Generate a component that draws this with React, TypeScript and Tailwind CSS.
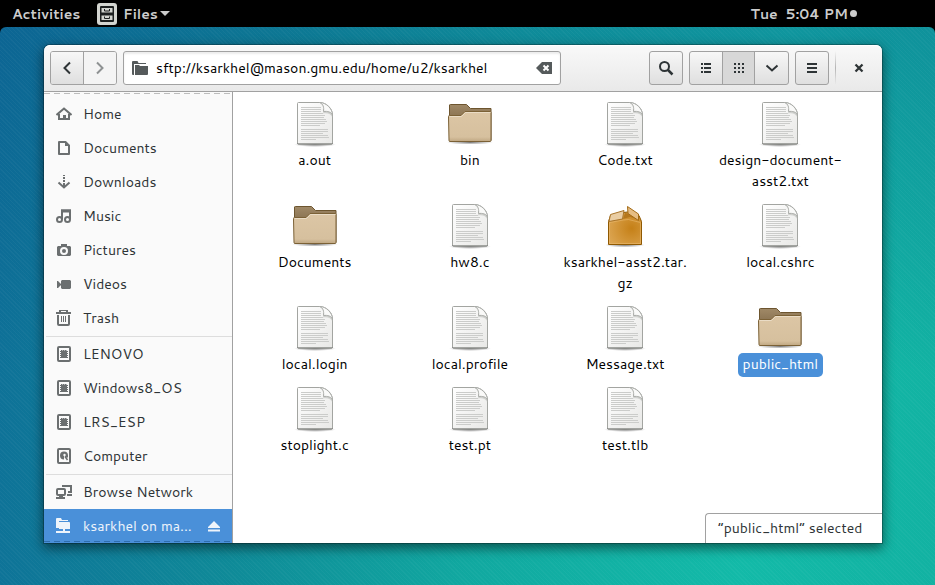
import React from "react";

type IconProps = { className?: string };

const svg16 = { viewBox: "0 0 16 16", width: 16, height: 16, fill: "none", "aria-hidden": true } as const;

const HomeIcon = () => (
  <svg {...svg16}>
    <path d="M.5 9 8 2.500 15.500 9" stroke="currentColor" strokeWidth="2" />
    <path d="M3 8v5h10V8" stroke="currentColor" strokeWidth="2" />
    <path d="M7 9h3v4H7z" fill="currentColor" />
  </svg>
);
const DocumentsIcon = () => (
  <svg {...svg16}>
    <path d="M3 2h6.500L13 5.500V14H3z" stroke="currentColor" strokeWidth="2" strokeLinejoin="round" />
    <path d="M9 1v5h5z" fill="currentColor" />
  </svg>
);
const DownloadsIcon = () => (
  <svg {...svg16}>
    <path d="M7 1h2v1H7zM7 3h2v2H7zM7 6h2v2H7z" fill="currentColor" />
    <path d="M2.500 8.500 8 13.500l5.500-5M8 9v4" stroke="currentColor" strokeWidth="2" />
  </svg>
);
const MusicIcon = () => (
  <svg {...svg16}>
    <path d="M6 11V2.500h8V11" stroke="currentColor" strokeWidth="2" />
    <path d="M5 1.500h10v3H5z" fill="currentColor" />
    <circle cx="3.500" cy="11.500" r="2.500" stroke="currentColor" strokeWidth="2" />
    <circle cx="11.500" cy="11.500" r="2.500" stroke="currentColor" strokeWidth="2" />
  </svg>
);
const PicturesIcon = () => (
  <svg {...svg16}>
    <path fillRule="evenodd" d="M5 2h6v2h3l1 1v8l-1 1H2l-1-1V5l1-1h3zM8 5a4 4 0 1 0 0 8 4 4 0 0 0 0-8zm0 2a2 2 0 1 1 0 4 2 2 0 0 1 0-4z" fill="currentColor" />
  </svg>
);
const VideosIcon = () => (
  <svg {...svg16}>
    <path d="M5 5l1-1h8l1 1v7l-1 1H6l-1-1zM1 5h1l3 3v1l-3 3H1z" fill="currentColor" />
  </svg>
);
const TrashIcon = () => (
  <svg {...svg16}>
    <path d="M2 5v9q0 1 1 1h9q1 0 1-1V5" stroke="currentColor" strokeWidth="2" />
    <path d="M0 2h15v2H0zM3 0h9v2H3z" fill="currentColor" />
    <path d="M5.500 6v6M7.500 6v6M9.500 6v6" stroke="currentColor" />
    <path d="M5 1.500h5" stroke="#fafafa" />
  </svg>
);
const ChipIcon = () => (
  <svg {...svg16}>
    <rect x="2" y="1" width="12" height="14" rx="1" stroke="currentColor" strokeWidth="2" />
    <path d="M5 4.500h6v7H5z" fill="currentColor" />
    <path d="M4 5.500h8M4 7.500h8M4 9.500h8M4 11.500h8M5.500 4v8M7.500 4v8M9.500 4v8" stroke="currentColor" />
  </svg>
);
const DiskIcon = () => (
  <svg {...svg16}>
    <rect x="2" y="1" width="12" height="14" rx="1" stroke="currentColor" strokeWidth="2" />
    <path d="M4 7.500a4 4 0 1 1 8 0v2h-2l-2-2v4a4 4 0 0 1-4-4z" fill="currentColor" />
    <circle cx="8.500" cy="7" r="1.200" fill="#fafafa" />
    <path d="M9 8.500l2.500 3.500" stroke="currentColor" strokeWidth="1.500" />
  </svg>
);
const NetworkIcon = () => (
  <svg {...svg16}>
    <rect x="1" y="5" width="8" height="6" rx="1" stroke="currentColor" strokeWidth="2" />
    <path d="M0 13h9v2H0zM3 12h4v2H3z" fill="currentColor" />
    <path d="M7 3V2h8v6h-3" stroke="currentColor" strokeWidth="2" />
    <path d="M11 10h5v2h-5z" fill="currentColor" />
  </svg>
);
const RemoteFolderIcon = () => (
  <svg {...svg16}>
    <path d="M0 1q0-1 1-1h4l1 2h6v1H3v7H0zM3 4h10q1 0 1 1v6H9v2h5v2H0v-2h7v-2H3z" fill="currentColor" />
  </svg>
);
const EjectIcon = () => (
  <svg viewBox="0 0 12 12" width="12" height="12" aria-hidden="true">
    <path d="M6 1l6 6v1H0V7zM0 9.500h12v2H0z" fill="currentColor" />
  </svg>
);
const ChevronIcon = ({ className }: IconProps) => (
  <svg {...svg16} className={className}>
    <path d="M11 2.500 5.500 8l5.500 5.500" stroke="currentColor" strokeWidth="2" />
  </svg>
);
const DownIcon = () => (
  <svg {...svg16}>
    <path d="M2.500 5.500 8 10.500l5.500-5" stroke="currentColor" strokeWidth="2" />
  </svg>
);
const FolderSymbol = () => (
  <svg {...svg16} className="shrink-0">
    <path d="M0 2q0-1 1-1h4.500l1 2H14v1H2v11H1q-1 0-1-1zM3 5h4l1 1h8v8q0 1-1 1H3z" fill="currentColor" />
  </svg>
);
const ClearIcon = () => (
  <svg {...svg16}>
    <path d="M6 2h10v12H6L0 8z" fill="currentColor" />
    <path d="M7.500 5.500l5 5M12.500 5.500l-5 5" stroke="#fff" strokeWidth="2" />
  </svg>
);
const SearchIcon = () => (
  <svg {...svg16}>
    <circle cx="6.500" cy="6.500" r="4.500" stroke="currentColor" strokeWidth="2" />
    <path d="M9.500 9.500l5 5" stroke="currentColor" strokeWidth="2.500" />
  </svg>
);
const ListIcon = () => (
  <svg {...svg16}>
    <path d="M3 3h2v2H3zM6 3h7v2H6zM3 7h2v2H3zM6 7h7v2H6zM3 11h2v2H3zM6 11h7v2H6z" fill="currentColor" />
  </svg>
);
const GridIcon = () => (
  <svg {...svg16}>
    <path d="M3 3h2v2H3zM7 3h2v2H7zM11 3h2v2h-2zM3 7h2v2H3zM7 7h2v2H7zM11 7h2v2h-2zM3 11h2v2H3zM7 11h2v2H7zM11 11h2v2h-2z" fill="currentColor" />
  </svg>
);
const MenuIcon = () => (
  <svg {...svg16}>
    <path d="M3 3h10v2H3zM3 7h10v2H3zM3 11h10v2H3z" fill="currentColor" />
  </svg>
);
const CloseIcon = () => (
  <svg {...svg16}>
    <path d="M4.500 4.500l7 7M11.500 4.500l-7 7" stroke="currentColor" strokeWidth="2.300" />
  </svg>
);
const CabinetIcon = () => (
  <svg viewBox="0 0 20 22" width="20" height="22" fill="none" aria-hidden="true">
    <rect width="20" height="22" rx="3" fill="#d3d5d0" />
    <rect x="3" y="3" width="14" height="16" rx="1" fill="#1c1f1f" />
    <path d="M4.500 5h11v4.500h-11zM4.500 12.500h11V17h-11z" fill="#d3d5d0" />
    <path d="M7.500 6v2h5V6M7.500 13.500v2h5v-2" stroke="#1c1f1f" />
  </svg>
);

const TextFileIcon = () => (
  <svg viewBox="0 0 48 48" width="48" height="48" fill="none" aria-hidden="true">
    <defs>
      <linearGradient id="paper" x1="0" y1="0" x2="1" y2="1">
        <stop offset="0" stopColor="#fff" />
        <stop offset="1" stopColor="#e8e8e6" />
      </linearGradient>
      <radialGradient id="shade">
        <stop offset="0" stopColor="#000" stopOpacity="0.500" />
        <stop offset="1" stopColor="#000" stopOpacity="0" />
      </radialGradient>
    </defs>
    <ellipse cx="24" cy="45.500" rx="21" ry="2.500" fill="url(#shade)" />
    <path d="M7.500 3.500h21c7 0 13 6 13 12.500v28q0 1-1 1h-33q-1 0-1-1v-39.500q0-1 1-1z" fill="url(#paper)" stroke="#a3a5a1" />
    <path d="M6.500 44q0 1 1 1h33q1 0 1-1" stroke="#7c7e7a" />
    <path d="M10 8.500h20M10 10.500h20M10 12.500h20M10 14.500h22M10 16.500h24M10 18.500h23M10 20.500h25M10 22.500h26M10 24.500h24M10 26.500h19M10 30.500h27M10 32.500h27M10 34.500h22M10 36.500h27M10 38.500h28M10 40.500h15" stroke="#cbccca" />
    <path d="M32 10.500c.5 1.500.5 2.500 0 4 4-1 8 0 9.500 4v-2c-1-3.500-5-5.500-9.500-6z" fill="#b9bab7" fillOpacity="0.600" />
    <path d="M28.500 3.500c4 1.500 4.500 5 4 9 4-.5 8 .5 9 3.500 0-6-6-12.500-13-12.500z" fill="#fafaf9" stroke="#a9aba7" />
  </svg>
);
const FolderIcon = () => (
  <svg viewBox="0 0 48 48" width="48" height="48" fill="none" aria-hidden="true">
    <defs>
      <linearGradient id="folderBack" x1="0" y1="0" x2="0" y2="1">
        <stop offset="0" stopColor="#a08967" />
        <stop offset="0.400" stopColor="#87704f" />
      </linearGradient>
      <linearGradient id="folderFront" x1="0" y1="0" x2="0" y2="1">
        <stop offset="0" stopColor="#dcc6a5" />
        <stop offset="0.850" stopColor="#d6c09e" />
        <stop offset="1" stopColor="#bfa782" />
      </linearGradient>
    </defs>
    <ellipse cx="24" cy="43.500" rx="23" ry="2" fill="url(#shade)" />
    <path d="M3.500 42V6q0-.5 1-.5h16l4 4h20.500v32z" fill="url(#folderBack)" stroke="#6d552f" />
    <path d="M2.500 17.500q0-1 1-1h11.500l4-4h25q1 0 1 1L45 41.500q0 1-1 1H4q-1 0-1-1z" fill="url(#folderFront)" stroke="#7b6136" />
    <path d="M3.700 17.500H15.500l4-4h25" stroke="#eadcc6" />
  </svg>
);
const PackageIcon = () => (
  <svg viewBox="0 0 48 48" width="48" height="48" fill="none" aria-hidden="true">
    <defs>
      <radialGradient id="box" cx="0.700" cy="0.500" r="0.800">
        <stop offset="0" stopColor="#c58017" />
        <stop offset="1" stopColor="#dda755" />
      </radialGradient>
    </defs>
    <ellipse cx="24" cy="44" rx="20" ry="2.500" fill="url(#shade)" />
    <path d="M7.500 20.500l2-6 13-3 4-.5 11.500 3.500 2.500 6v23h-33z" fill="url(#box)" stroke="#8f5902" />
    <path d="M22 18l2-6 3 .5 11 6-9-2.500z" fill="#b5771c" />
    <path d="M8.500 21.500l14-2.500 5-.5 12 3v21h-31z" stroke="#e9b96e" strokeOpacity="0.600" />
    <path d="M9.500 13.500l13.500-4-1.500 8.500-13.500 2.500z" fill="#e9cda3" stroke="#a9752a" />
    <path d="M26.500 5.500l11 7.500v6.500l-10.500-7z" fill="#e6bd83" stroke="#a46a14" />
  </svg>
);

const places = [
  [
    { label: "Home", Icon: HomeIcon },
    { label: "Documents", Icon: DocumentsIcon },
    { label: "Downloads", Icon: DownloadsIcon },
    { label: "Music", Icon: MusicIcon },
    { label: "Pictures", Icon: PicturesIcon },
    { label: "Videos", Icon: VideosIcon },
    { label: "Trash", Icon: TrashIcon },
  ],
  [
    { label: "LENOVO", Icon: ChipIcon },
    { label: "Windows8_OS", Icon: ChipIcon },
    { label: "LRS_ESP", Icon: ChipIcon },
    { label: "Computer", Icon: DiskIcon },
  ],
  [{ label: "Browse Network", Icon: NetworkIcon }],
];

type FileItem = { lines: string[]; kind: "text" | "folder" | "package"; selected?: boolean };

const files: FileItem[] = [
  { lines: ["a.out"], kind: "text" },
  { lines: ["bin"], kind: "folder" },
  { lines: ["Code.txt"], kind: "text" },
  { lines: ["design-document-", "asst2.txt"], kind: "text" },
  { lines: ["Documents"], kind: "folder" },
  { lines: ["hw8.c"], kind: "text" },
  { lines: ["ksarkhel-asst2.tar.", "gz"], kind: "package" },
  { lines: ["local.cshrc"], kind: "text" },
  { lines: ["local.login"], kind: "text" },
  { lines: ["local.profile"], kind: "text" },
  { lines: ["Message.txt"], kind: "text" },
  { lines: ["public_html"], kind: "folder", selected: true },
  { lines: ["stoplight.c"], kind: "text" },
  { lines: ["test.pt"], kind: "text" },
  { lines: ["test.tlb"], kind: "text" },
];

const fileIcons = { text: TextFileIcon, folder: FolderIcon, package: PackageIcon };

const button =
  "flex h-[34px] w-[34px] shrink-0 items-center justify-center rounded-[3px] border border-[#a1a1a1] bg-linear-to-b from-[#f7f7f7] to-[#dfdfdf] text-[#2e3436]";
const segment = "flex w-[33px] items-center justify-center";

function TopBar() {
  return (
    <header className="grid h-[27px] shrink-0 grid-cols-[1fr_auto] items-center bg-black pr-[78px] pl-3 text-sm font-bold text-[#cccccc]">
      <div className="flex items-center">
        <button className="w-[85px] text-left">Activities</button>
        <button className="flex items-center gap-1.5">
          <CabinetIcon />
          <span>Files</span>
          <svg viewBox="0 0 10 5" width="10" height="5" aria-hidden="true" className="-ml-1">
            <path d="M0 0h10L5 5z" fill="currentColor" />
          </svg>
        </button>
      </div>
      <button className="flex items-center gap-0.5 whitespace-pre">
        Tue{"  "}5:04 PM
        <span className="size-[7px] rounded-full bg-[#cccccc]" />
      </button>
    </header>
  );
}

function HeaderBar() {
  return (
    <div className="flex gap-1.5 rounded-t-md border-b border-[#a1a1a1] bg-linear-to-b from-[#f9f9f9] to-[#e9e9e9] p-1.5 text-[#2e3436] shadow-[inset_0_1px_#fff]">
      <div className="flex h-[34px] w-[67px] shrink-0 overflow-hidden rounded-[3px] border border-[#a1a1a1]">
        <button aria-label="Back" className="flex flex-1 items-center justify-center border-r border-[#a1a1a1] bg-linear-to-b from-[#f7f7f7] to-[#dfdfdf]">
          <ChevronIcon />
        </button>
        <button aria-label="Forward" disabled className="flex flex-1 items-center justify-center bg-[#f4f4f4] text-[#8e9192]">
          <ChevronIcon className="rotate-180" />
        </button>
      </div>
      <div className="flex h-[34px] min-w-0 flex-1 items-center gap-2 rounded-[3px] border border-[#a1a1a1] bg-white px-2 text-[#555a5b] shadow-[inset_0_2px_2px_#ececec]">
        <FolderSymbol />
        <input
          aria-label="Location"
          defaultValue="sftp://ksarkhel@mason.gmu.edu/home/u2/ksarkhel"
          className="h-full min-w-0 flex-1 bg-transparent text-sm text-black outline-none"
        />
        <button aria-label="Clear">
          <ClearIcon />
        </button>
      </div>
      <button aria-label="Search" className={`${button} ml-[82px]`}>
        <SearchIcon />
      </button>
      <div className="flex h-[34px] w-[100px] shrink-0 divide-x divide-[#a1a1a1] overflow-hidden rounded-[3px] border border-[#a1a1a1] bg-linear-to-b from-[#f7f7f7] to-[#dfdfdf]">
        <button aria-label="List view" className={segment}>
          <ListIcon />
        </button>
        <button aria-label="Icon view" aria-pressed="true" className={`${segment} bg-[#d8d8d8]`}>
          <GridIcon />
        </button>
        <button aria-label="View options" className={segment}>
          <DownIcon />
        </button>
      </div>
      <button aria-label="Menu" className={button}>
        <MenuIcon />
      </button>
      <div className="w-px shrink-0 bg-linear-to-b from-transparent via-[#b4b4b4] to-transparent" />
      <button aria-label="Close" className="flex w-[34px] shrink-0 items-center justify-center">
        <CloseIcon />
      </button>
    </div>
  );
}

function Sidebar() {
  return (
    <nav className="relative w-[189px] shrink-0 border-r border-[#a1a1a1] bg-[#fafafa] pt-[5px] text-sm text-[#2e3436]">
      <div className="absolute inset-x-0 top-px h-px bg-[repeating-linear-gradient(90deg,#bdbdbd_0_6px,transparent_6px_10px)]" />
      {places.map((group, i) => (
        <ul key={i} className={i > 0 ? "mt-px" : ""}>
          {i > 0 && <li aria-hidden="true" className="ml-0.5 h-px bg-[#dddddd]" />}
          {group.map(({ label, Icon }) => (
            <li key={label}>
              <a href="#" className="flex h-[34px] items-center gap-[11px] pl-3">
                <span className="text-[#6b6f70]">
                  <Icon />
                </span>
                {label}
              </a>
            </li>
          ))}
        </ul>
      ))}
      <div className="flex h-[34px] items-center bg-[#4a90d9] px-3 text-[#eef4fb]">
        <a href="#" className="flex min-w-0 flex-1 items-center gap-[11px]">
          <RemoteFolderIcon />
          ksarkhel on ma...
        </a>
        <button aria-label="Eject">
          <EjectIcon />
        </button>
      </div>
      <div className="absolute inset-x-0 bottom-px h-px bg-[repeating-linear-gradient(90deg,#2f6dad_0_6px,transparent_6px_10px)]" />
    </nav>
  );
}

function FileGrid() {
  return (
    <main className="relative min-w-0 flex-1 bg-white">
      <ul className="grid grid-cols-4 gap-y-[7px] pt-[7px] pr-6 pl-1">
        {files.map(({ lines, kind, selected }) => {
          const Icon = fileIcons[kind];
          return (
            <li key={lines[0]} className="flex flex-col items-center gap-0.5 text-sm leading-[21px]">
              <Icon />
              <span className={`rounded-[5px] px-[5px] pt-px pb-0.5 text-center ${selected ? "bg-[#4a90d9] text-white" : "text-black"}`}>
                {lines.map((line) => (
                  <span key={line} className="block whitespace-nowrap">
                    {line}
                  </span>
                ))}
              </span>
            </li>
          );
        })}
      </ul>
      <p className="absolute right-0 bottom-0 w-[177px] rounded-tl border-t border-l border-[#a1a1a1] bg-white pl-3 text-sm leading-[29px] whitespace-nowrap text-[#2e3436]">
        “public_html” selected
      </p>
    </main>
  );
}

export default function App() {
  return (
    <div className="flex min-h-screen flex-col bg-black font-[Cantarell,'Noto_Sans',sans-serif]">
      <TopBar />
      <div className="flex-1 rounded-t-md bg-[repeating-linear-gradient(45deg,rgba(255,255,255,0.03)_0_1px,transparent_1px_3px),linear-gradient(180deg,rgba(10,84,140,0.36),rgba(10,84,140,0)_62%),linear-gradient(95deg,#0e6f98_0%,#0f8a98_28%,#11a8a0_52%,#13baa8_80%,#12b2a2_100%)] pt-[18px] pr-[53px] pb-[42px] pl-11">
        <div className="rounded-t-md shadow-[0_0_0_1px_rgba(0,0,0,0.25),0_4px_12px_1px_rgba(0,0,0,0.5)]">
          <HeaderBar />
          <div className="flex">
            <Sidebar />
            <FileGrid />
          </div>
        </div>
      </div>
    </div>
  );
}
